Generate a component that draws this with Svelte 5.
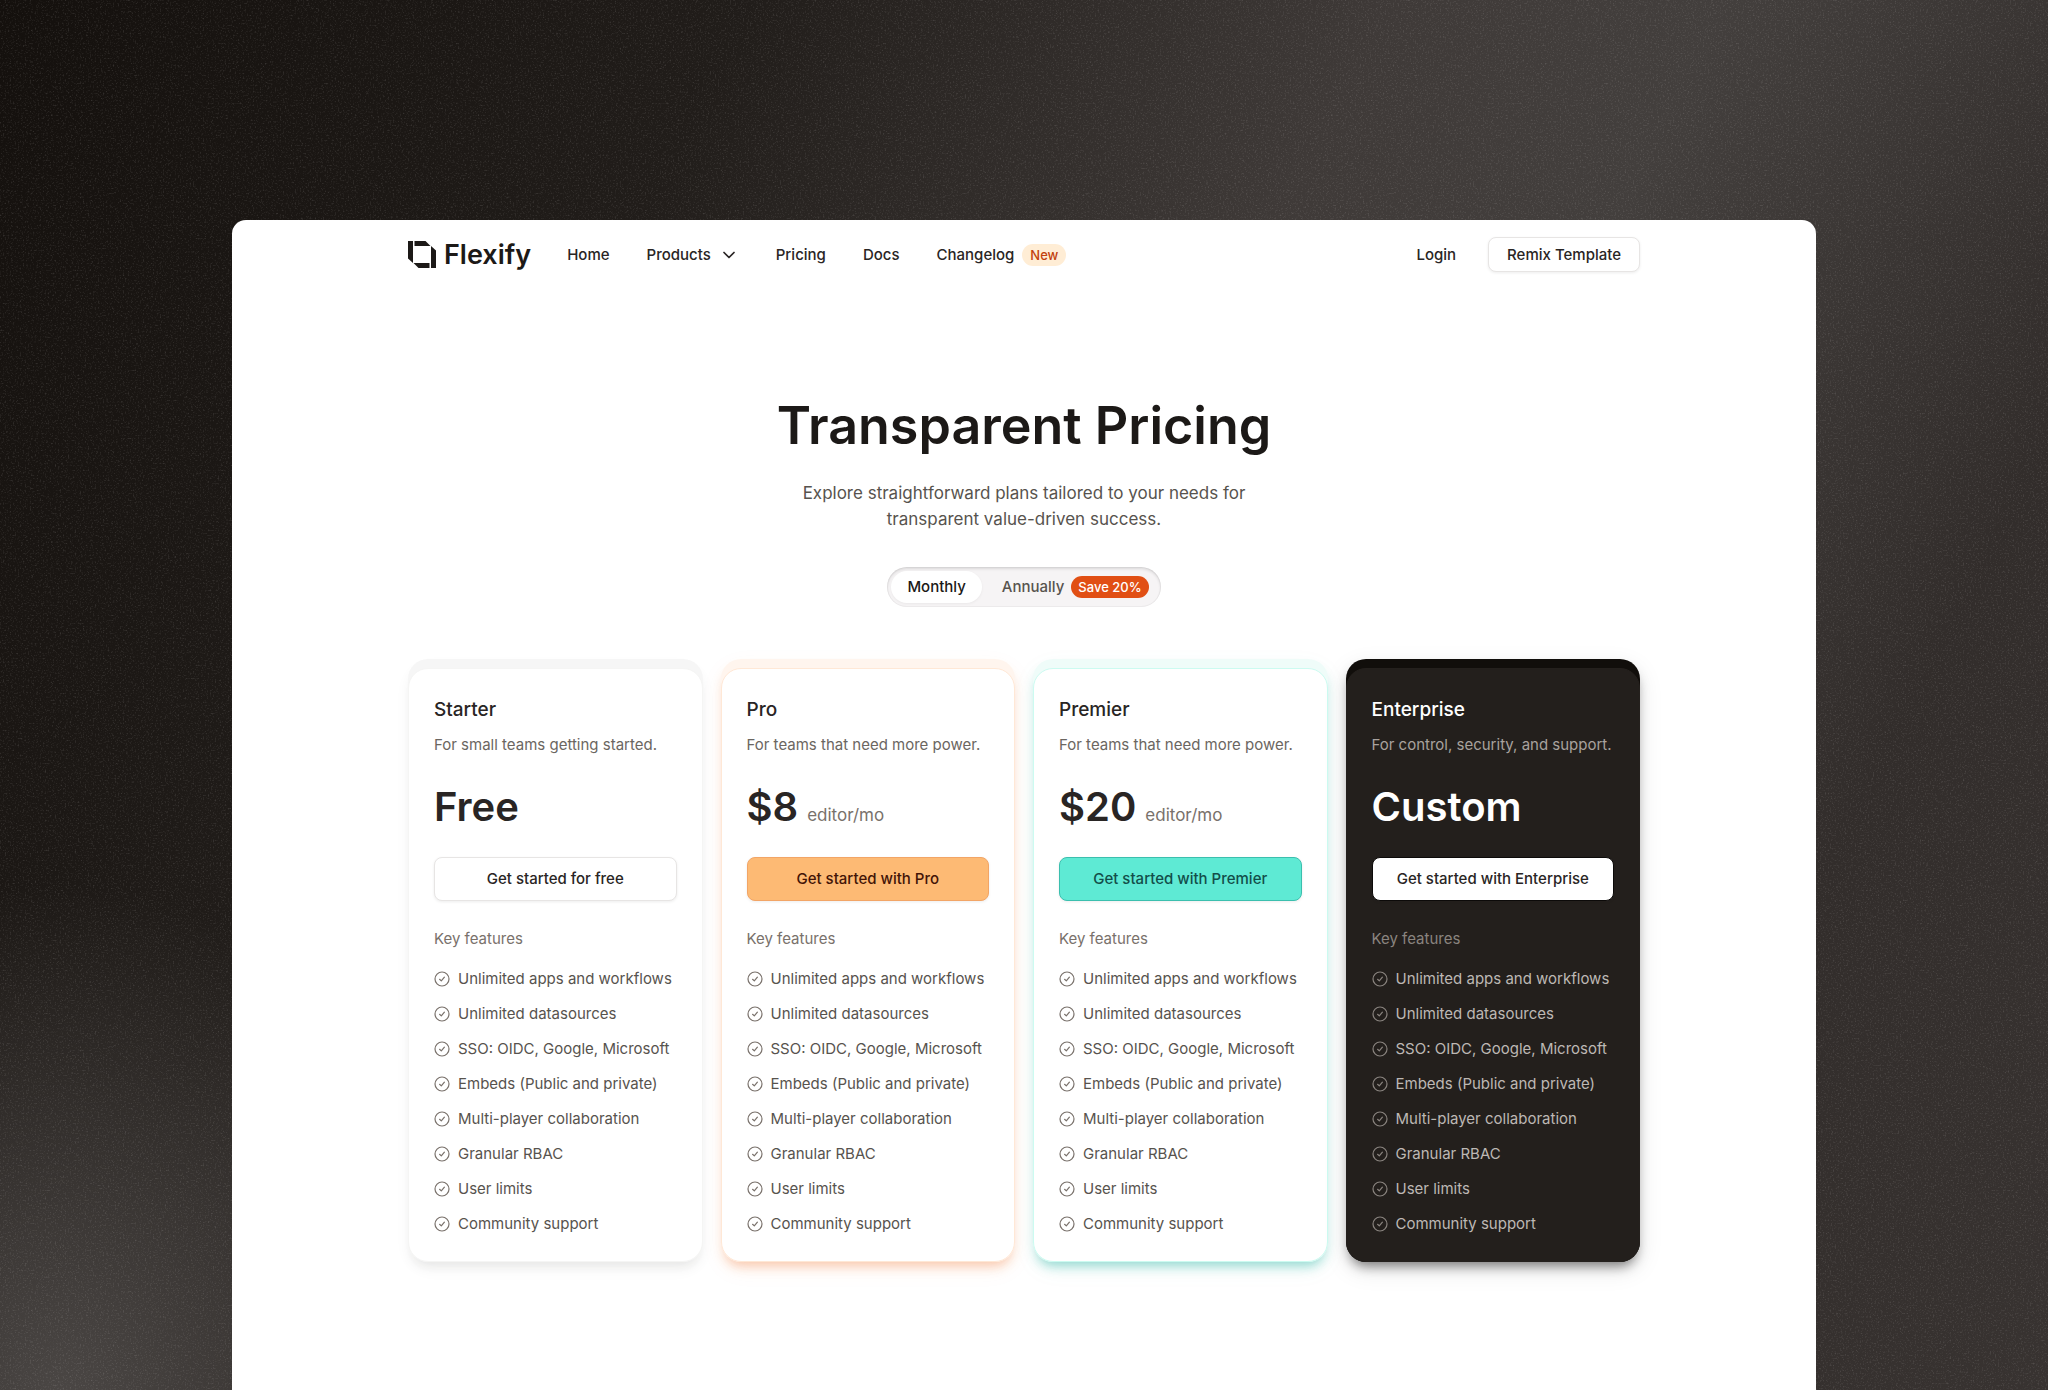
<script>
  const features = [
    'Unlimited apps and workflows',
    'Unlimited datasources',
    'SSO: OIDC, Google, Microsoft',
    'Embeds (Public and private)',
    'Multi-player collaboration',
    'Granular RBAC',
    'User limits',
    'Community support'
  ];

  const plans = [
    { id: 'starter', name: 'Starter', blurb: 'For small teams getting started.', price: 'Free', unit: '', cta: 'Get started for free' },
    { id: 'pro', name: 'Pro', blurb: 'For teams that need more power.', price: '$8', unit: 'editor/mo', cta: 'Get started with Pro' },
    { id: 'premier', name: 'Premier', blurb: 'For teams that need more power.', price: '$20', unit: 'editor/mo', cta: 'Get started with Premier' },
    { id: 'enterprise', name: 'Enterprise', blurb: 'For control, security, and support.', price: 'Custom', unit: '', cta: 'Get started with Enterprise' }
  ];

  let billing = $state('monthly');
</script>

<div class="backdrop">
  <svg class="grain" aria-hidden="true">
    <filter id="grain">
      <feTurbulence type="fractalNoise" baseFrequency="0.6" numOctaves="2" seed="4" />
      <feColorMatrix values="0 0 0 0 1  0 0 0 0 0.97  0 0 0 0 0.96  3 0 0 0 -1.6" />
    </filter>
    <rect width="100%" height="100%" filter="url(#grain)" />
  </svg>

  <div class="sheet">
    <header class="bar">
      <a class="brand" href="#home" aria-label="Flexify">
        <svg class="mark" viewBox="0 0 28 27" aria-hidden="true">
          <path d="M0 0H5V22L0 17.500Z" />
          <path d="M6.500 0H17.500L22.500 5H6.500Z" />
          <path d="M23 5L28 9.500V27H23Z" />
          <path d="M5.500 22H21.500V27H10.500Z" />
        </svg>
        <span>Flexify</span>
      </a>
      <nav class="links" aria-label="Main">
        <a href="#home">Home</a>
        <button class="menu" type="button" aria-haspopup="true">
          Products
          <svg class="chevron" viewBox="0 0 12 8" aria-hidden="true"><path d="M1 1.500L6 6.500L11 1.500" /></svg>
        </button>
        <a href="#pricing">Pricing</a>
        <a href="#docs">Docs</a>
        <a class="tagged" href="#changelog">Changelog <span class="new">New</span></a>
      </nav>
      <div class="account">
        <a href="#login">Login</a>
        <button class="outline remix" type="button">Remix Template</button>
      </div>
    </header>

    <main>
      <section class="hero">
        <h1>Transparent Pricing</h1>
        <p>Explore straightforward plans tailored to your needs for<br />transparent value-driven success.</p>
        <div class="toggle" role="radiogroup" aria-label="Billing period">
          <label>
            <input type="radio" name="billing" value="monthly" bind:group={billing} />
            <span class="option">Monthly</span>
          </label>
          <label>
            <input type="radio" name="billing" value="annually" bind:group={billing} />
            <span class="option">Annually <span class="save">Save 20%</span></span>
          </label>
        </div>
      </section>

      <section class="plans" aria-label="Plans">
        {#each plans as plan (plan.id)}
          <article class="plan {plan.id}">
            <div class="face">
              <h2>{plan.name}</h2>
              <p class="blurb">{plan.blurb}</p>
              <p class="price">
                <strong>{plan.price}</strong>
                {#if plan.unit}<span>{plan.unit}</span>{/if}
              </p>
              <button class="outline cta" type="button">{plan.cta}</button>
              <h3>Key features</h3>
              <ul>
                {#each features as feature}
                  <li>
                    <svg viewBox="0 0 16 16" aria-hidden="true">
                      <circle cx="8" cy="8" r="7" />
                      <path d="M5.600 8.300L7.300 9.900L10.400 6.100" />
                    </svg>
                    {feature}
                  </li>
                {/each}
              </ul>
            </div>
          </article>
        {/each}
      </section>
    </main>
  </div>
</div>

<style>
  :global(body) {
    margin: 0;
    background: #1c1815;
  }

  .backdrop {
    position: relative;
    display: flex;
    flex-direction: column;
    align-items: center;
    box-sizing: border-box;
    min-height: 100vh;
    padding-top: 220px;
    font-family: Inter, 'Liberation Sans', sans-serif;
    font-size: 15px;
    line-height: 24px;
    color: #292524;
    background:
      radial-gradient(ellipse 420px 520px at 3% 101%, #4b4745 0%, rgba(75, 71, 69, 0) 100%),
      linear-gradient(118deg, #14100d 0%, #1b1714 16%, #211d1a 27%, #3f3a38 50%, #433f3d 62%, #322d2b 82%, #383331 100%);
  }

  .grain {
    position: absolute;
    inset: 0;
    width: 100%;
    height: 100%;
    opacity: 0.12;
  }

  .sheet {
    position: relative;
    flex: 1;
    box-sizing: border-box;
    width: 100%;
    max-width: 1584px;
    padding: 0 176px 120px;
    border-radius: 14px 14px 0 0;
    background: #fff;
  }

  a {
    color: inherit;
    text-decoration: none;
  }

  button {
    font: inherit;
    color: inherit;
    cursor: pointer;
  }

  h1,
  h2,
  h3,
  p,
  ul {
    margin: 0;
    padding: 0;
  }

  .bar {
    display: flex;
    align-items: center;
    height: 69px;
    font-weight: 500;
  }

  .brand {
    display: flex;
    align-items: center;
    gap: 8px;
    font-size: 27px;
    font-weight: 600;
    line-height: 32px;
    color: #1c1917;
  }

  .mark {
    width: 28px;
    height: 27px;
    fill: #1c1917;
  }

  .links {
    display: flex;
    align-items: center;
    gap: 37px;
    margin-left: 36px;
  }

  .menu {
    display: flex;
    align-items: center;
    gap: 12px;
    padding: 0 4px 0 0;
    border: 0;
    background: none;
  }

  .chevron {
    width: 12px;
    height: 8px;
    fill: none;
    stroke: #292524;
    stroke-width: 1.7;
    stroke-linecap: round;
    stroke-linejoin: round;
  }

  .tagged {
    display: flex;
    align-items: center;
    gap: 8px;
  }

  .new {
    padding: 0 8px;
    border-radius: 11px;
    font-size: 13px;
    line-height: 22px;
    color: #c2410c;
    background: #ffedd5;
  }

  .account {
    display: flex;
    align-items: center;
    gap: 32px;
    margin-left: auto;
  }

  .outline {
    border: 1px solid #e7e5e4;
    border-radius: 8px;
    font-weight: 500;
    background: #fff;
    box-shadow: 0 1px 3px rgba(28, 25, 23, 0.08);
  }

  .remix {
    height: 35px;
    padding: 0 18px;
  }

  .hero {
    display: flex;
    flex-direction: column;
    align-items: center;
    padding: 107px 0 52px;
    text-align: center;
  }

  h1 {
    font-size: 52px;
    font-weight: 600;
    line-height: 60px;
    color: #1c1917;
  }

  .hero p {
    margin: 24px 0 35px;
    font-size: 17px;
    line-height: 26px;
    color: #57534e;
  }

  .toggle {
    display: flex;
    gap: 4px;
    padding: 4px;
    border-radius: 20px;
    font-weight: 500;
    background: #f6f4f5;
    box-shadow:
      inset 0 2px 3px rgba(28, 25, 23, 0.12),
      inset 0 0 0 1px rgba(28, 25, 23, 0.04);
  }

  .toggle label {
    position: relative;
    cursor: pointer;
  }

  .toggle input {
    position: absolute;
    inset: 0;
    margin: 0;
    opacity: 0;
    cursor: pointer;
  }

  .option {
    display: flex;
    align-items: center;
    gap: 7px;
    height: 32px;
    padding: 0 8px 0 16px;
    border-radius: 16px;
    color: #57534e;
  }

  .toggle input:checked + .option {
    padding-right: 16px;
    color: #1c1917;
    background: #fff;
    box-shadow: 0 1px 3px rgba(28, 25, 23, 0.05);
  }

  .save {
    padding: 0 7px;
    border-radius: 11px;
    font-size: 13px;
    line-height: 22px;
    color: #fff;
    background: #e14f14;
  }

  .plans {
    display: grid;
    grid-template-columns: repeat(4, 1fr);
    gap: 18px;
  }

  .plan {
    --rim: #f6f6f6;
    --line: #f5f5f4;
    --glow: rgba(28, 25, 23, 0.1);
    --haze: rgba(28, 25, 23, 0.02);
    padding-top: 9px;
    border-radius: 20px;
    background: var(--rim);
    box-shadow:
      0 8px 12px -4px var(--glow),
      0 8px 24px var(--haze);
  }

  .face {
    padding: 27px 25px 25px;
    border: 1px solid var(--line);
    border-radius: 20px;
    background: #fff;
  }

  .pro {
    --rim: #fff5ee;
    --line: #ffe8d6;
    --glow: rgba(240, 110, 40, 0.36);
    --haze: rgba(240, 110, 40, 0.05);
  }

  .premier {
    --rim: #effcf9;
    --line: #ccfbf1;
    --glow: rgba(13, 170, 150, 0.42);
    --haze: rgba(13, 170, 150, 0.05);
  }

  .enterprise {
    --rim: #110e0b;
    --line: #24201d;
    --glow: rgba(12, 10, 9, 0.5);
    --haze: rgba(12, 10, 9, 0.1);
  }

  .enterprise .face {
    color: #fff;
    background: #231f1c;
  }

  h2 {
    font-size: 19px;
    font-weight: 500;
    line-height: 28px;
  }

  .blurb {
    margin-top: 9px;
    color: #6b6661;
    white-space: nowrap;
  }

  .price {
    display: flex;
    align-items: baseline;
    gap: 9px;
    margin: 26px 0;
    line-height: 48px;
  }

  .price strong {
    font-size: 40px;
    font-weight: 600;
  }

  .price span {
    font-size: 17px;
    line-height: 24px;
    color: #79716b;
  }

  .cta {
    display: block;
    width: 100%;
    height: 44px;
  }

  .pro .cta {
    border-color: #f2a566;
    color: #431407;
    background: #fdba74;
  }

  .premier .cta {
    border-color: #3bbfae;
    color: #134e4a;
    background: #5eead4;
  }

  .enterprise .cta {
    border-color: #0c0a09;
    color: #292524;
  }

  h3 {
    margin: 26px 0 16px;
    font-size: 15px;
    font-weight: 400;
    color: #79716b;
  }

  ul {
    display: flex;
    flex-direction: column;
    gap: 11px;
    list-style: none;
  }

  li {
    display: flex;
    align-items: center;
    gap: 8px;
    color: #57534e;
    white-space: nowrap;
  }

  li svg {
    flex: none;
    width: 16px;
    height: 16px;
    fill: none;
    stroke: #79716b;
    stroke-width: 1.2;
    stroke-linecap: round;
    stroke-linejoin: round;
  }

  .enterprise .blurb {
    color: #a8a29e;
  }

  .enterprise h3,
  .enterprise .price span {
    color: #8a847f;
  }

  .enterprise li {
    color: #bdb8b4;
  }

  .enterprise li svg {
    stroke: #8a847f;
  }
</style>
